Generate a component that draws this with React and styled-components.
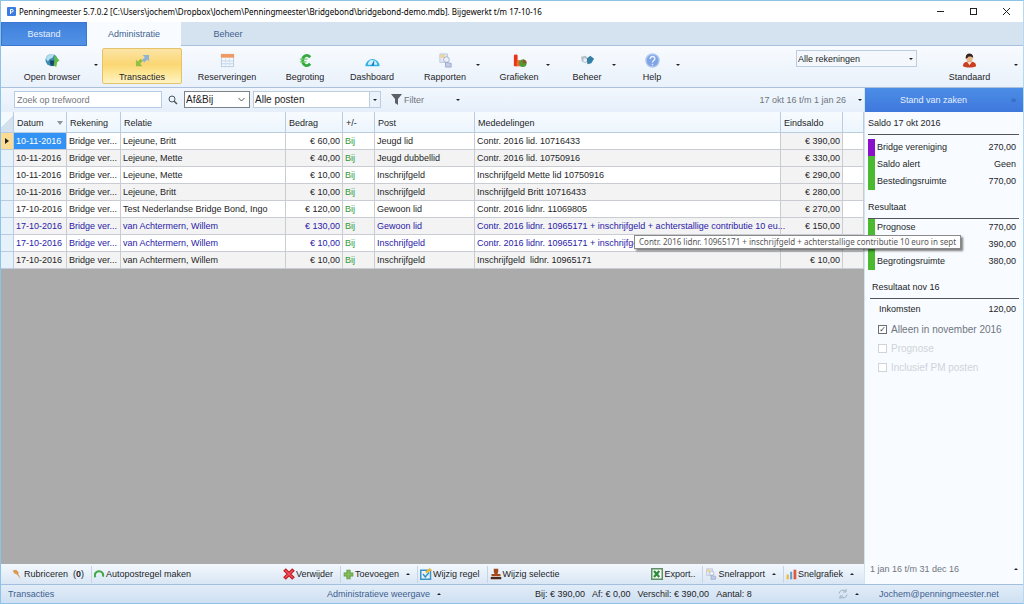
import React, { useState } from 'react'
import styled, { createGlobalStyle, css } from 'styled-components'

const COLORS = {
  TEXT: '#1e1e28',
  MUTED: '#6f7680',
  TAB: '#3f5f8f',
  LINE: '#a9c1de',
  GRID_LINE: '#c9ccd2',
  EDITED: '#2a20a8',
  GREEN: '#2f9a3c',
  GREEN_BAR: '#4cba30',
  PURPLE_BAR: '#8a10cc',
}
const UI_FONT = "'Liberation Sans', Arial, sans-serif"
const TITLE_FONT = "'Noto Sans', 'Open Sans', sans-serif"

const GlobalStyle = createGlobalStyle`
  * {
    box-sizing: border-box;
  }
  body {
    margin: 0;
    font-family: ${UI_FONT};
    font-size: 9px;
    line-height: 12px;
    color: ${COLORS.TEXT};
  }
  button, input, select {
    font: inherit;
    color: inherit;
    margin: 0;
  }
  button {
    border: 0;
    padding: 0;
    background: none;
    cursor: pointer;
  }
`

const Window = styled.div`
  display: flex;
  flex-direction: column;
  min-height: 100vh;
  border: 1px solid #8cc4e8;
  border-right-color: #b5d9ee;
  background: #ecf3fc;
`
const TitleBar = styled.header`
  display: flex;
  align-items: center;
  height: 21px;
  padding-left: 6px;
  background: white;
  font-family: ${TITLE_FONT};
`
const Title = styled.h1`
  flex: 1;
  margin: 0 0 0 3px;
  font-size: 8px;
  font-weight: normal;
  color: black;
`
const WindowButton = styled.button`
  display: flex;
  align-items: center;
  justify-content: center;
  width: 33px;
  height: 21px;
`
const Tabs = styled.nav`
  display: flex;
  height: 24px;
  background: #d5e2f0;
  border-bottom: 1px solid ${COLORS.LINE};
`
const Tab = styled.button`
  width: 94px;
  height: 24px;
  color: ${COLORS.TAB};
  ${({ $kind }) =>
    $kind === 'file' &&
    css`
      width: 86px;
      color: #e6f0ff;
      border: 1px solid #3b76d2;
      background: linear-gradient(#3f80dc, #5292e6);
    `}
  ${({ $kind }) =>
    $kind === 'active' &&
    css`
      background: #f8fbff;
    `}
`
const Arrow = styled.i`
  justify-self: center;
  flex: none;
  width: 0;
  height: 0;
  border: 2px solid transparent;
  ${({ $up }) =>
    $up
      ? css`
          border-top-width: 0;
          border-bottom-color: #222;
        `
      : css`
          border-bottom-width: 0;
          border-top-color: #222;
        `}
`
const Ribbon = styled.div`
  display: flex;
  height: 42px;
  padding: 2px 1px;
  background: linear-gradient(#f8fbff, #e9f1fa);
  border-bottom: 1px solid ${COLORS.LINE};
`
const RibbonButton = styled.button`
  display: grid;
  grid-template-columns: 10px 1fr 10px;
  align-items: center;
  width: ${({ $width }) => $width}px;
  height: 36px;
  border: 1px solid transparent;
  border-radius: 2px;
  ${({ $active }) =>
    $active &&
    css`
      border-color: #e3c26a;
      background: linear-gradient(#fbe4a6, #fbd673 45%, #fde694 70%, #fff3c4);
    `}
  ${Arrow} {
    margin-bottom: 3px;
  }
`
const RibbonLabel = styled.span`
  grid-column: 2;
  display: flex;
  flex-direction: column;
  align-items: center;
  gap: 3px;
  margin: 0 -10px;
  padding-top: 4px;
  white-space: nowrap;
`
const RibbonAside = styled.div`
  flex: 1;
  display: flex;
  justify-content: flex-end;
  padding-top: 2px;
`
const Spacer = styled.div`
  flex: 1;
`
const SelectBox = styled.label`
  display: grid;
  grid-template-columns: 1fr 11px;
  align-items: center;
  width: ${({ $width }) => $width}px;
  height: 17px;
  border: 1px solid ${({ $dark }) => ($dark ? '#7c828a' : '#bccde2')};
  background: ${({ $plain }) => ($plain ? '#f4f8fd' : 'white')};
  color: ${COLORS.TEXT};
  ${Arrow}, svg {
    grid-column: 2;
    grid-row: 1;
    pointer-events: none;
  }
`
const Select = styled.select`
  grid-column: 1 / 3;
  grid-row: 1;
  width: 100%;
  height: 15px;
  padding: 0 1px;
  border: 0;
  background: none;
  appearance: none;
`
const DropCell = styled.span`
  grid-column: 2;
  grid-row: 1;
  display: flex;
  align-items: center;
  justify-content: center;
  height: 15px;
  border-left: 1px solid #bccde2;
  background: #eaf2fb;
  pointer-events: none;
`
const Body = styled.div`
  flex: 1;
  display: grid;
  grid-template-columns: minmax(0, 1fr) 159px;
`
const Workspace = styled.main`
  position: relative;
  display: flex;
  flex-direction: column;
  background: #ababab;
`
const FilterBar = styled.div`
  display: flex;
  align-items: center;
  height: 24px;
  padding: 0 2px 1px 13px;
  background: linear-gradient(#f2f7fd, #e6effa);
  color: ${COLORS.MUTED};
`
const Search = styled.input`
  width: 148px;
  height: 17px;
  padding: 0 2px;
  border: 1px solid #b6cce6;
  background: white;
  &::placeholder {
    color: #72777e;
    opacity: 1;
  }
`
const IconButton = styled.button`
  display: flex;
  align-items: center;
  justify-content: center;
  width: 22px;
  height: 17px;
`
const Selects = styled.div`
  display: flex;
  gap: 3px;
  font-size: 10px;
`
const FilterButton = styled.button`
  display: flex;
  align-items: center;
  gap: 2px;
  width: 69px;
  margin-left: 10px;
  span {
    flex: 1;
    text-align: left;
  }
`
const RangeButton = styled.button`
  display: flex;
  align-items: center;
  gap: 12px;
`
const Table = styled.table`
  width: 100%;
  table-layout: fixed;
  border-collapse: separate;
  border-spacing: 0;
  background: white;
`
const Th = styled.th`
  height: 21px;
  padding: 2px 3px 0;
  border-right: 1px solid #b9cce2;
  border-bottom: 1px solid #b9cce2;
  background: linear-gradient(#f7fbff, #edf5fd);
  font-weight: normal;
  text-align: left;
`
const Corner = styled(Th)`
  background: linear-gradient(135deg, #f4f9fe 50%, #d3e0ee 50%);
`
const SortHead = styled.span`
  display: flex;
  align-items: center;
  justify-content: space-between;
`
const Td = styled.td`
  height: 17px;
  padding: 0 2px;
  border-right: 1px solid ${COLORS.GRID_LINE};
  border-bottom: 1px solid ${COLORS.GRID_LINE};
  white-space: pre;
  text-align: ${({ $right }) => ($right ? 'right' : 'left')};
  ${({ $shade }) => $shade && 'background: #f3f3f3;'}
  ${({ $selected }) => $selected && 'background: #3393f5; color: white;'}
`
const Sign = styled.span`
  color: ${COLORS.GREEN};
`
const RowHead = styled.td`
  padding: 0 4px;
  border-right: 1px solid #b9cce2;
  border-bottom: 1px solid #b9cce2;
  background: ${({ $current }) => ($current ? '#fbdc94' : '#e6f1fb')};
  line-height: 0;
`
const Row = styled.tr`
  color: ${({ $edited }) => ($edited ? COLORS.EDITED : COLORS.TEXT)};
  &:nth-child(even) {
    background: #f3f3f3;
  }
`
const Balance = styled(Td)`
  color: ${COLORS.TEXT};
`
const Tooltip = styled.div`
  position: absolute;
  z-index: 2;
  top: 147px;
  left: 633px;
  padding: 0 4px;
  border: 1px solid #8a8a8a;
  background: white;
  box-shadow: 2px 2px 2px rgba(0, 0, 0, 0.5);
  color: #575757;
  font-family: ${TITLE_FONT};
  font-size: 8px;
  white-space: nowrap;
`
const ActionBar = styled.div`
  display: flex;
  align-items: center;
  gap: 4px;
  height: 20px;
  margin-top: auto;
  padding: 0 7px 0 11px;
  background: linear-gradient(#f3f8fd, #d9e6f4);
`
const Action = styled.button`
  display: flex;
  align-items: center;
  gap: 1px;
  height: 17px;
  padding-right: 3px;
  white-space: nowrap;
  ${Arrow} {
    margin-left: 6px;
  }
  & + & {
    border-left: 1px solid #c6d5e6;
    padding-left: 2px;
  }
`
const Sidebar = styled.aside`
  display: flex;
  flex-direction: column;
  background: #f8fbff;
  border-left: 1px solid #d4e2f2;
`
const SideHead = styled.button`
  display: flex;
  align-items: center;
  height: 24px;
  padding-right: 7px;
  background: linear-gradient(#4b8de6, #3f78dc);
  color: #e4efff;
  span {
    flex: 1;
  }
  i {
    width: 14px;
    font-style: normal;
    text-align: right;
    color: #2856a8;
  }
`
const Section = styled.section`
  padding: ${({ $inset }) => ($inset ? '0 4px 0 5px' : '0 4px 0 3px')};
  margin-bottom: 6px;
`
const SectionTitle = styled.h2`
  margin: 0;
  padding: 5px ${({ $inset }) => ($inset ? 2 : 0)}px;
  border-bottom: 1px solid #50555e;
  font-size: inherit;
  font-weight: normal;
`
const Figures = styled.dl`
  margin: ${({ $top = 0 }) => $top}px 0 0;
`
const Figure = styled.div`
  display: flex;
  justify-content: space-between;
  height: 17px;
  padding: 2px 3px 3px 2px;
  border-left: 7px solid ${({ $color }) => $color || 'transparent'};
  dt,
  dd {
    margin: 0;
  }
`
const Checks = styled.div`
  padding: 2px 0 0 8px;
`
const Check = styled.label`
  display: flex;
  align-items: center;
  gap: 4px;
  height: 19px;
  font-size: 10px;
  color: ${({ $off }) => ($off ? '#d0d4d9' : COLORS.MUTED)};
`
const Checkbox = styled.input`
  appearance: none;
  display: grid;
  place-items: center;
  width: 9px;
  height: 9px;
  border: 1px solid #6a6f76;
  background: white;
  &:disabled {
    border-color: #d0d4d9;
  }
  &:checked::after {
    content: '✓';
    color: #33383e;
    font: bold 8px/8px 'DejaVu Sans', sans-serif;
  }
`
const Period = styled.button`
  display: flex;
  align-items: center;
  justify-content: space-between;
  height: 31px;
  margin-top: auto;
  padding: 0 5px;
  color: ${COLORS.MUTED};
`
const StatusBar = styled.footer`
  display: grid;
  grid-template-columns: 326px 206px minmax(0, 1fr) 26px 159px;
  align-items: center;
  height: 19px;
  border-top: 1px solid #a4bfdd;
  background: linear-gradient(#e1ecf8, #cfe0f2);
  color: ${COLORS.TAB};
`
const StatusText = styled.span`
  padding-left: 7px;
`
const StatusButton = styled.button`
  display: flex;
  align-items: center;
  gap: 7px;
`
const Totals = styled.div`
  display: flex;
  gap: 7px;
  padding-left: 2px;
  color: ${COLORS.TEXT};
`
const Mail = styled.a`
  padding-left: 15px;
  color: inherit;
  text-decoration: none;
`

/*----------------------------------------------------------------------------------
 *  ICONS
 *---------------------------------------------------------------------------------*/

const ICONS = {
  globe: (
    <>
      <circle cx="7" cy="7.5" r="6.5" fill="#3c8cb4" />
      <path d="M1 6c1-4 6-6 9-4.500L8 5 5 6.500 3 9z" fill="#b4dff0" />
      <path d="M5 8h5v6l-4-1z" fill="#1a4568" />
      <path d="M10 2l5.500 6-2.500 1.500L12 15l-3-2 1-4z" fill="#5fbd45" />
    </>
  ),
  arrows: (
    <>
      <path d="M1 14V7l2 2 3-3 2.500 2.500-3 3L8 14z" fill="#93bf45" />
      <path d="M15 2v7l-2-2-3 3-2.500-2.500 3-3L8 2z" fill="#8fb2d8" />
    </>
  ),
  calendar: (
    <>
      <rect x="1.500" y="1.500" width="13" height="13" fill="#f6f9fd" stroke="#b9cce2" />
      <rect x="1" y="1" width="14" height="4" fill="#ef9a62" />
      <path d="M2 8.500h12M2 11.500h12" stroke="#b9cfe8" />
      <path d="M6 5v9M10 5v9" stroke="#d5e1ef" />
    </>
  ),
  euro: (
    <>
      <path d="M13 4.500C9.500.5 5 3 5 8s4.500 7.500 8 3.500" stroke="#35a93f" strokeWidth="3" />
      <path d="M2 6.500h8M2 9.500h7" stroke="#6fcb68" strokeWidth="1.500" />
    </>
  ),
  gauge: (
    <>
      <path d="M.5 14a7.500 7.500 0 1 1 15 0z" fill="#2fb2e4" />
      <path d="M3 12.500a5 5 0 0 1 10 0z" fill="#d3f1fc" />
      <path d="M8 3v3M3.500 6l2 2M12.500 6l-2 2" stroke="#e8f8fe" />
      <path d="M6.500 13.500L10 7l-.5 6.500z" fill="#1583b8" />
    </>
  ),
  report: (
    <>
      <path d="M2 1h8v9H2z" fill="#e3e7f3" stroke="#bcc5db" />
      <path d="M3 2h4v3H3z" fill="#f4d27c" />
      <circle cx="9" cy="7" r="3" fill="#edf0f8" stroke="#a3b0d0" />
      <path d="M8 10l6 1v4H8z" fill="#c3cbe6" stroke="#9ba9cc" />
    </>
  ),
  chart: (
    <>
      <path d="M2 3c0-2 4-2 4 0v11H2z" fill="#e93518" />
      <path d="M5 8c1-1 4-1 4 1v5H5z" fill="#f26a2c" />
      <circle cx="11.500" cy="11" r="4" fill="#4f9a36" />
      <path d="M11.500 11V7a4 4 0 0 1 4 4z" fill="#97522f" />
    </>
  ),
  manage: (
    <>
      <path d="M1 4l5-1 4 4-4 4-4-2z" fill="#b7c1ca" />
      <path d="M7 6l4-3 4 3-3 5-4 1z" fill="#347fa6" />
      <circle cx="5.500" cy="7.500" r="2" fill="#edf2f6" />
    </>
  ),
  help: (
    <>
      <circle cx="8" cy="8" r="7" fill="#7fa3e4" stroke="#b1c8f0" strokeWidth="1.500" />
      <path d="M5.500 6.500c0-4 5-3 5-.5 0 2-2.500 2-2.500 4M8 11.500V13" stroke="#e8f0fd" strokeWidth="1.500" />
    </>
  ),
  user: (
    <>
      <path d="M1 14c0-4 3-5 7-5s7 1 7 5c-3 2-11 2-14 0z" fill="#c8401f" />
      <path d="M5.500 9.500h5L8 13z" fill="#f7e4cf" />
      <circle cx="8" cy="5.500" r="3.500" fill="#e9b787" />
      <path d="M4 6C3-1 12-1 12 5c-2-1-5-2-6 0z" fill="#33231c" />
    </>
  ),
  pin: <path d="M1 2l5-1 4 4-1 2 4 8-6-7-4-2z" fill="#d99a54" />,
  auto: (
    <>
      <path d="M2 12a6 6 0 1 1 11-1" stroke="#45a846" strokeWidth="3" />
      <path d="M4 12c2-4 5-4 8 0v3H4z" fill="#dcecf8" />
    </>
  ),
  remove: (
    <>
      <path d="M2 2l12 12M14 2L2 14" stroke="#c01820" strokeWidth="5" />
      <path d="M3 3l10 10M13 3L3 13" stroke="#f0535a" strokeWidth="2" />
    </>
  ),
  add: (
    <>
      <path d="M8 1v14M1 8h14" stroke="#5f9c3e" strokeWidth="6" />
      <path d="M8 2v12M2 8h12" stroke="#86bd62" strokeWidth="3" />
    </>
  ),
  edit: (
    <>
      <rect x="1" y="3" width="13" height="12" fill="#eaf4fb" stroke="#3a94c9" strokeWidth="2" />
      <path d="M4 8l3 4 5-6" stroke="#3a94c9" strokeWidth="2" />
      <path d="M7 5l6-5 3 3-8 4z" fill="#edb72f" />
    </>
  ),
  stamp: (
    <>
      <path d="M5 1h6v4l-1 3h4v3H2V8h4L5 5z" fill="#a34a1d" />
      <path d="M1 12h14v3H1z" fill="#4a291b" />
    </>
  ),
  sheet: (
    <>
      <rect x="1" y="1" width="14" height="14" fill="#f5fbf4" stroke="#5d8f62" strokeWidth="2" />
      <path d="M4 4l7 8M11 4l-7 8" stroke="#2f8b3c" strokeWidth="3" />
    </>
  ),
  bars: (
    <>
      <path d="M1 8h3v7H1z" fill="#f1b62c" />
      <path d="M6 4h3v11H6z" fill="#5aa0d0" />
      <path d="M11 1h4v14h-4z" fill="#e2593a" />
    </>
  ),
}

const Icon = ({ name, size = 15 }) => (
  <svg width={size} height={size} viewBox="0 0 16 16" fill="none" aria-hidden="true">
    {ICONS[name]}
  </svg>
)

/*----------------------------------------------------------------------------------
 *  DATA
 *---------------------------------------------------------------------------------*/

const RIBBON = [
  { label: 'Open browser', icon: 'globe', width: 100, arrow: true },
  { label: 'Transacties', icon: 'arrows', width: 80, active: true },
  { label: 'Reserveringen', icon: 'calendar', width: 90 },
  { label: 'Begroting', icon: 'euro', width: 66 },
  { label: 'Dashboard', icon: 'gauge', width: 68 },
  { label: 'Rapporten', icon: 'report', width: 78, arrow: true },
  { label: 'Grafieken', icon: 'chart', width: 70, arrow: true },
  { label: 'Beheer', icon: 'manage', width: 66, arrow: true },
  { label: 'Help', icon: 'help', width: 64, arrow: true },
]

const COLUMNS = [13, 53, 54, 165, 57, 32, 100, null, 62, 21]

const ROWS = [
  ['10-11-2016', 'Lejeune, Britt', '60,00', 'Jeugd lid', 'Contr. 2016 lid. 10716433', '390,00'],
  ['10-11-2016', 'Lejeune, Mette', '40,00', 'Jeugd dubbellid', 'Contr. 2016 lid. 10750916', '330,00'],
  ['10-11-2016', 'Lejeune, Mette', '10,00', 'Inschrijfgeld', 'Inschrijfgeld Mette lid 10750916', '290,00'],
  ['10-11-2016', 'Lejeune, Britt', '10,00', 'Inschrijfgeld', 'Inschrijfgeld Britt 10716433', '280,00'],
  ['17-10-2016', 'Test Nederlandse Bridge Bond, Ingo', '120,00', 'Gewoon lid', 'Contr. 2016 lidnr. 11069805', '270,00'],
  ['17-10-2016', 'van Achtermern, Willem', '130,00', 'Gewoon lid', 'Contr. 2016 lidnr. 10965171 + inschrijfgeld + achterstallige contributie 10 eu...', '150,00', true],
  ['17-10-2016', 'van Achtermern, Willem', '10,00', 'Inschrijfgeld', 'Contr. 2016 lidnr. 10965171 + inschrijfgeld', '20,00', true],
  ['17-10-2016', 'van Achtermern, Willem', '10,00', 'Inschrijfgeld', 'Inschrijfgeld  lidnr. 10965171', '10,00'],
]

const BALANCE = [
  { label: 'Bridge vereniging', value: '270,00', color: COLORS.PURPLE_BAR },
  { label: 'Saldo alert', value: 'Geen', color: COLORS.GREEN_BAR },
  { label: 'Bestedingsruimte', value: '770,00', color: COLORS.GREEN_BAR },
]

const RESULT = [
  { label: 'Prognose', value: '770,00', color: COLORS.GREEN_BAR },
  { label: 'Begroot', value: '390,00', color: COLORS.GREEN_BAR },
  { label: 'Begrotingsruimte', value: '380,00', color: COLORS.GREEN_BAR },
]

const MONTH = [{ label: 'Inkomsten', value: '120,00' }]

/*----------------------------------------------------------------------------------
 *  RENDER PHASE
 *---------------------------------------------------------------------------------*/

const FigureList = ({ items, top }) => (
  <Figures $top={top}>
    {items.map(({ label, value, color }) => (
      <Figure key={label} $color={color}>
        <dt>{label}</dt>
        <dd>{value}</dd>
      </Figure>
    ))}
  </Figures>
)

const TransactionTable = () => (
  <Table>
    <colgroup>
      {COLUMNS.map((width, i) => (
        <col key={i} width={width || undefined} />
      ))}
    </colgroup>
    <thead>
      <tr>
        <Corner />
        <Th>
          <SortHead>
            Datum
            <svg width="6" height="4" viewBox="0 0 6 4" aria-hidden="true">
              <path d="M0 0h6L3 4z" fill="#8c959f" />
            </svg>
          </SortHead>
        </Th>
        <Th>Rekening</Th>
        <Th>Relatie</Th>
        <Th>Bedrag</Th>
        <Th>+/-</Th>
        <Th>Post</Th>
        <Th>Mededelingen</Th>
        <Th>Eindsaldo</Th>
        <Th />
      </tr>
    </thead>
    <tbody>
      {ROWS.map(([date, name, amount, post, note, balance, edited], i) => (
        <Row key={i} $edited={edited}>
          <RowHead $current={i === 0}>
            {i === 0 && (
              <svg width="4" height="6" viewBox="0 0 4 6" aria-hidden="true">
                <path d="M0 0l4 3-4 3z" fill="#222" />
              </svg>
            )}
          </RowHead>
          <Td $selected={i === 0}>{date}</Td>
          <Td>Bridge ver...</Td>
          <Td>{name}</Td>
          <Td $right>€ {amount}</Td>
          <Td>
            <Sign>Bij</Sign>
          </Td>
          <Td>{post}</Td>
          <Td>{note}</Td>
          <Balance $right $shade>
            € {balance}
          </Balance>
          <Td />
        </Row>
      ))}
    </tbody>
  </Table>
)

const App = () => {
  const [onlyMonth, setOnlyMonth] = useState(true)

  return (
    <Window>
      <GlobalStyle />
      <TitleBar>
        <svg width="9" height="9" viewBox="0 0 9 9" aria-hidden="true">
          <rect width="9" height="9" rx="1" fill="#3c7be0" />
          <path d="M3.500 7V2.500H5a1.200 1.200 0 0 1 0 2.500H3.500" stroke="white" fill="none" />
        </svg>
        <Title>
          {
            'Penningmeester 5.7.0.2 [C:\\Users\\jochem\\Dropbox\\Jochem\\Penningmeester\\Bridgebond\\bridgebond-demo.mdb]. Bijgewerkt t/m 17-10-16'
          }
        </Title>
        <WindowButton aria-label="Minimaliseren">
          <svg width="7" height="7" viewBox="0 0 7 7">
            <path d="M0 3.500h7" stroke="#222" />
          </svg>
        </WindowButton>
        <WindowButton aria-label="Maximaliseren">
          <svg width="7" height="7" viewBox="0 0 7 7">
            <rect x=".5" y=".5" width="6" height="6" fill="none" stroke="#222" />
          </svg>
        </WindowButton>
        <WindowButton aria-label="Sluiten">
          <svg width="7" height="7" viewBox="0 0 7 7">
            <path d="M0 0l7 7M7 0L0 7" stroke="#222" />
          </svg>
        </WindowButton>
      </TitleBar>
      <Tabs>
        <Tab $kind="file">Bestand</Tab>
        <Tab $kind="active">Administratie</Tab>
        <Tab>Beheer</Tab>
      </Tabs>
      <Ribbon>
        {RIBBON.map(({ label, icon, width, arrow, active }) => (
          <RibbonButton key={label} $width={width} $active={active}>
            <RibbonLabel>
              <Icon name={icon} />
              {label}
            </RibbonLabel>
            {arrow && <Arrow />}
          </RibbonButton>
        ))}
        <RibbonAside>
          <SelectBox $width={121} $plain>
            <Select aria-label="Rekening">
              <option>Alle rekeningen</option>
            </Select>
            <Arrow />
          </SelectBox>
        </RibbonAside>
        <RibbonButton $width={105}>
          <RibbonLabel>
            <Icon name="user" />
            Standaard
          </RibbonLabel>
          <Arrow />
        </RibbonButton>
      </Ribbon>
      <Body>
        <Workspace>
          <FilterBar>
            <Search placeholder="Zoek op trefwoord" aria-label="Zoek op trefwoord" />
            <IconButton aria-label="Zoeken">
              <svg width="10" height="10" viewBox="0 0 10 10">
                <circle cx="4" cy="4" r="3" fill="none" stroke="#4b545e" />
                <path d="M6 6l3 3" stroke="#4b545e" strokeWidth="1.500" />
              </svg>
            </IconButton>
            <Selects>
              <SelectBox $width={66} $dark>
                <Select aria-label="Af of bij">
                  <option>Af&amp;Bij</option>
                </Select>
                <svg width="7" height="4" viewBox="0 0 7 4" aria-hidden="true">
                  <path d="M.5 0l3 3 3-3" fill="none" stroke="#555" />
                </svg>
              </SelectBox>
              <SelectBox $width={128}>
                <Select aria-label="Post">
                  <option>Alle posten</option>
                </Select>
                <DropCell>
                  <Arrow />
                </DropCell>
              </SelectBox>
            </Selects>
            <FilterButton>
              <svg width="11" height="11" viewBox="0 0 11 11" aria-hidden="true">
                <path d="M0 0h11L7 5v6L4 9V5z" fill="#5b6066" />
              </svg>
              <span>Filter</span>
              <Arrow />
            </FilterButton>
            <Spacer />
            <RangeButton>
              17 okt 16 t/m 1 jan 26
              <Arrow />
            </RangeButton>
          </FilterBar>
          <TransactionTable />
          <Tooltip role="tooltip">
            Contr. 2016 lidnr. 10965171 + inschrijfgeld + achterstallige contributie 10 euro in sept
          </Tooltip>
          <ActionBar>
            <Action>
              <Icon name="pin" size={11} />
              <span>
                Rubriceren&nbsp; (<b>0</b>)
              </span>
            </Action>
            <Action>
              <Icon name="auto" size={11} />
              Autopostregel maken
            </Action>
            <Spacer />
            <Action>
              <Icon name="remove" size={12} />
              Verwijder
            </Action>
            <Action>
              <Icon name="add" size={11} />
              Toevoegen
              <Arrow $up />
            </Action>
            <Action>
              <Icon name="edit" size={12} />
              Wijzig regel
            </Action>
            <Action>
              <Icon name="stamp" size={12} />
              Wijzig selectie
            </Action>
            <Spacer />
            <Action>
              <Icon name="sheet" size={12} />
              Export..
            </Action>
            <Action>
              <Icon name="report" size={12} />
              Snelrapport
              <Arrow $up />
            </Action>
            <Action>
              <Icon name="bars" size={11} />
              Snelgrafiek
              <Arrow $up />
            </Action>
          </ActionBar>
        </Workspace>
        <Sidebar>
          <SideHead>
            <span>Stand van zaken</span>
            <i>»</i>
          </SideHead>
          <Section>
            <SectionTitle>Saldo 17 okt 2016</SectionTitle>
            <FigureList items={BALANCE} top={4} />
          </Section>
          <Section>
            <SectionTitle>Resultaat</SectionTitle>
            <FigureList items={RESULT} />
          </Section>
          <Section $inset>
            <SectionTitle $inset>Resultaat nov 16</SectionTitle>
            <FigureList items={MONTH} top={2} />
            <Checks>
              <Check>
                <Checkbox
                  type="checkbox"
                  checked={onlyMonth}
                  onChange={(e) => setOnlyMonth(e.target.checked)}
                />
                Alleen in november 2016
              </Check>
              <Check $off>
                <Checkbox type="checkbox" disabled />
                Prognose
              </Check>
              <Check $off>
                <Checkbox type="checkbox" disabled />
                Inclusief PM posten
              </Check>
            </Checks>
          </Section>
          <Period>
            1 jan 16 t/m 31 dec 16
            <Arrow $up />
          </Period>
        </Sidebar>
      </Body>
      <StatusBar>
        <StatusText>Transacties</StatusText>
        <StatusButton>
          Administratieve weergave
          <Arrow $up />
        </StatusButton>
        <Totals>
          <span>Bij: € 390,00</span>
          <span>Af: € 0,00</span>
          <span>Verschil: € 390,00</span>
          <span>Aantal: 8</span>
        </Totals>
        <StatusButton aria-label="Vernieuwen">
          <svg width="10" height="10" viewBox="0 0 10 10" aria-hidden="true">
            <path d="M1 4.500a4 4 0 0 1 7-2M9 5.500a4 4 0 0 1-7 2M8 0v3H5M2 10V7h3" fill="none" stroke="#a3b2c3" />
          </svg>
          <Arrow $up />
        </StatusButton>
        <Mail href="mailto:Jochem@penningmeester.net">Jochem@penningmeester.net</Mail>
      </StatusBar>
    </Window>
  )
}

export default App
